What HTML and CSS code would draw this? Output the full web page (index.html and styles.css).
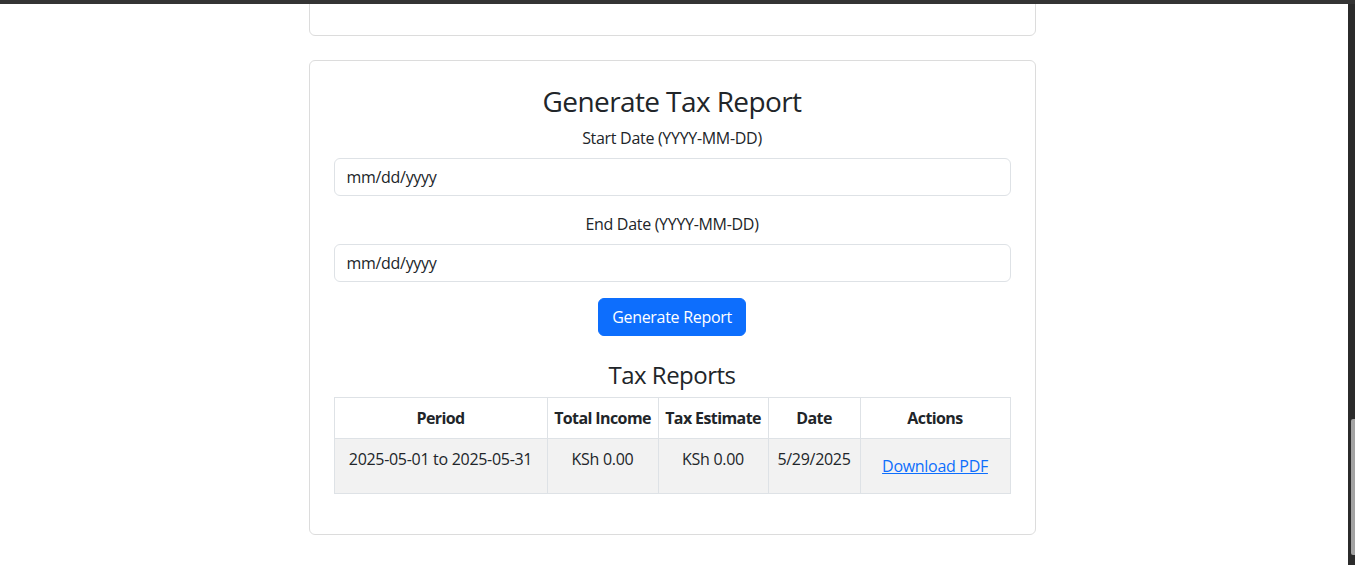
FILE: index.html
```html
<!DOCTYPE html>
<html lang="en">
<head>
<meta charset="utf-8">
<title>Generate Tax Report</title>
<link rel="stylesheet" href="styles.css">
</head>
<body>
<div class="topbar"></div>
<div class="scrollbar"><div class="thumb"></div></div>
<main class="page">
  <section class="card card-prev"></section>
  <section class="card report-card">
    <h2 class="title">Generate Tax Report</h2>
    <form class="form">
      <label class="label" for="start">Start Date (YYYY-MM-DD)</label>
      <input class="input" id="start" type="text" placeholder="mm/dd/yyyy">
      <label class="label label-gap" for="end">End Date (YYYY-MM-DD)</label>
      <input class="input" id="end" type="text" placeholder="mm/dd/yyyy">
      <div class="actions"><button class="btn-primary" type="button">Generate Report</button></div>
    </form>
    <h4 class="subtitle">Tax Reports</h4>
    <table class="table">
      <thead>
        <tr>
          <th class="c-period">Period</th>
          <th class="c-income">Total Income</th>
          <th class="c-tax">Tax Estimate</th>
          <th class="c-date">Date</th>
          <th class="c-actions">Actions</th>
        </tr>
      </thead>
      <tbody>
        <tr>
          <td>2025-05-01 to 2025-05-31</td>
          <td>KSh 0.00</td>
          <td>KSh 0.00</td>
          <td>5/29/2025</td>
          <td><a class="link-btn" href="#">Download PDF</a></td>
        </tr>
      </tbody>
    </table>
  </section>
</main>
</body>
</html>
```

FILE: styles.css
```css
* { box-sizing: border-box; }
html, body { margin: 0; padding: 0; }
body {
  font-family: "Open Sans", "Noto Sans", sans-serif;
  font-size: 16px;
  line-height: 1.5;
  letter-spacing: -0.3px;
  color: #212529;
  background: #fff;
  overflow: hidden;
}
.topbar {
  position: fixed;
  top: 0; left: 0; right: 0;
  height: 4px;
  background: #343434;
  z-index: 5;
}
.scrollbar {
  position: fixed;
  top: 0; right: 0; bottom: 0;
  width: 7px;
  background: #2b2b2b;
  z-index: 4;
}
.thumb {
  position: absolute;
  left: 3px; right: 0;
  top: 419px;
  height: 136px;
  background: #a3a3a3;
  border-radius: 2px 0 0 2px;
}
.page {
  width: 1344px;
  display: flex;
  flex-direction: column;
  align-items: center;
  gap: 24px;
}
.card {
  width: 727px;
  border: 1px solid #dcdcdc;
  border-radius: 6px;
  background: #fff;
}
.card-prev {
  height: 60px;
  margin-top: -24px;
}
.report-card {
  padding: 24px;
  text-align: center;
}
.title {
  margin: 0 0 8px;
  font-size: 28px;
  font-weight: 400;
  line-height: 33px;
  letter-spacing: -0.6px;
}
.form { display: flex; flex-direction: column; }
.label { display: block; margin-bottom: 8px; }
.label-gap { margin-top: 16px; }
.input {
  display: block;
  width: 100%;
  height: 38px;
  padding: 6px 12px;
  font: inherit;
  letter-spacing: inherit;
  color: #212529;
  border: 1px solid #dee2e6;
  border-radius: 6px;
  background: #fff;
}
.input::placeholder { color: #212529; opacity: 1; }
.actions { margin-top: 16px; }
.btn-primary {
  height: 38px;
  padding: 6px 13px;
  font: inherit;
  letter-spacing: inherit;
  color: #fff;
  background: #0d6efd;
  border: 1px solid #0d6efd;
  border-radius: 6px;
}
.subtitle {
  margin: 24px 0 8px;
  font-size: 24px;
  font-weight: 400;
  line-height: 29px;
  letter-spacing: -0.5px;
}
.table {
  width: 100%;
  border-collapse: collapse;
  margin-bottom: 16px;
}
.table th, .table td {
  border: 1px solid #dee2e6;
  padding: 8px 4px;
  vertical-align: top;
  text-align: center;
  white-space: nowrap;
}
.table th { font-weight: 700; letter-spacing: -0.6px; }
.table tbody td { background: #f2f2f2; }
.c-period { width: 213px; }
.c-income { width: 111px; }
.c-tax { width: 110px; }
.c-date { width: 92px; }
.c-actions { width: 150px; }
.link-btn {
  display: inline-block;
  padding: 6px 12px;
  border: 1px solid transparent;
  color: #0d6efd;
  text-decoration: underline;
}
```
